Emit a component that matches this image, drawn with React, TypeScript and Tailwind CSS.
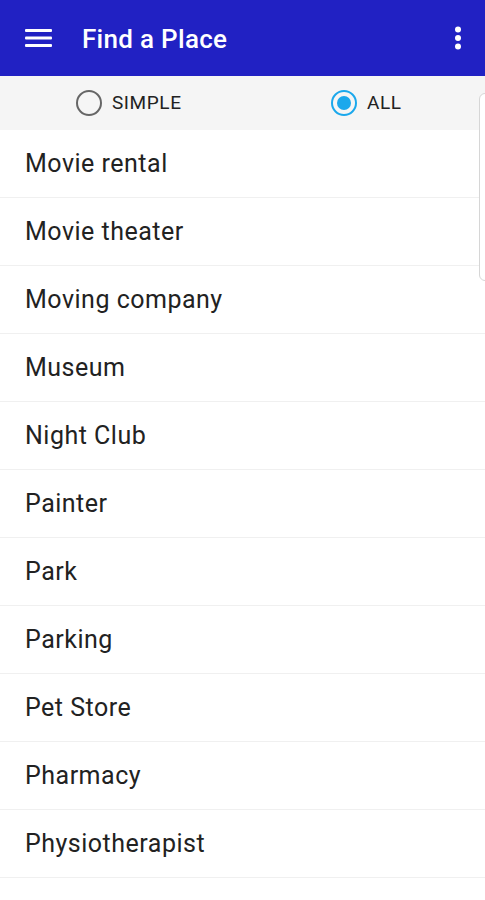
import React, { useState } from 'react';

const places = [
  'Movie rental',
  'Movie theater',
  'Moving company',
  'Museum',
  'Night Club',
  'Painter',
  'Park',
  'Parking',
  'Pet Store',
  'Pharmacy',
  'Physiotherapist',
  'Place of Worship',
  'Plumber',
];

const Radio = ({ checked, label, onClick }: { checked: boolean; label: string; onClick: () => void }) => (
  <button onClick={onClick} className="flex items-center gap-[10px]">
    <span
      className={`w-[26px] h-[26px] rounded-full border-[2.5px] flex items-center justify-center ${
        checked ? 'border-[#1ba8ec]' : 'border-[#666]'
      }`}
    >
      {checked && <span className="w-[14px] h-[14px] rounded-full bg-[#1ba8ec]" />}
    </span>
    <span className="text-[19px] text-[#222] tracking-[0.6px]">{label}</span>
  </button>
);

export default function App() {
  const [mode, setMode] = useState<'simple' | 'all'>('all');

  return (
    <div className="w-[485px] h-[900px] overflow-hidden bg-white relative font-['Roboto',sans-serif]">
      <header className="h-[76px] bg-[#2121c3] flex items-center px-[25px] text-white">
        <svg width="27" height="18" viewBox="0 0 27 18" fill="white">
          <rect x="0" y="0" width="27" height="3" rx="1" />
          <rect x="0" y="7.5" width="27" height="3" rx="1" />
          <rect x="0" y="15" width="27" height="3" rx="1" />
        </svg>
        <h1 className="ml-[30px] mt-[3px] text-[26px] font-medium tracking-[0.3px] flex-1">Find a Place</h1>
        <svg width="8" height="24" viewBox="0 0 8 24" fill="white" className="mr-[-2px]">
          <circle cx="4" cy="3.5" r="3" />
          <circle cx="4" cy="12" r="3" />
          <circle cx="4" cy="20.5" r="3" />
        </svg>
      </header>

      <div className="h-[54px] bg-[#f5f5f5] flex pl-[10px]">
        <div className="flex-1 flex items-center justify-center">
          <Radio checked={mode === 'simple'} label="SIMPLE" onClick={() => setMode('simple')} />
        </div>
        <div className="flex-1 flex items-center justify-center">
          <Radio checked={mode === 'all'} label="ALL" onClick={() => setMode('all')} />
        </div>
      </div>

      <ul>
        {places.map((p) => (
          <li
            key={p}
            className="h-[68px] flex items-center px-[25px] border-b border-[#f0f0f0] text-[25px] tracking-[0.5px] text-[#222]"
          >
            {p}
          </li>
        ))}
      </ul>

      {/* scroll indicator */}
      <div className="absolute right-[-8px] top-[93px] w-[14px] h-[188px] rounded-[6px] border-[1.5px] border-[#d6d6d6] bg-white" />
    </div>
  );
}
